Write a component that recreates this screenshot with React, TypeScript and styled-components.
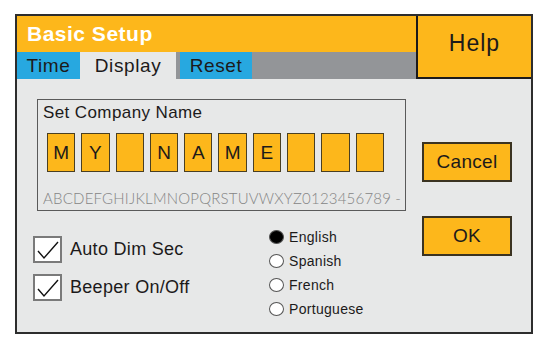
import React from 'react';
import styled, { createGlobalStyle } from 'styled-components';

const Global = createGlobalStyle`
  body {
    margin: 0;
    background: #ffffff;
    font-family: "Liberation Sans", Arial, sans-serif;
  }
`;

const orange = '#fdb71b';
const blue = '#27a8e0';
const panel = '#e7e8e8';
const ink = '#1c1a1a';

const Frame = styled.div`
  box-sizing: border-box;
  margin: 14px 0 0 15px;
  width: 518px;
  height: 320px;
  border: 2px solid #2d2d2d;
  background: ${panel};
  display: flex;
  flex-direction: column;
`;

const Header = styled.div`
  display: flex;
  height: 63px;
`;

const HeaderMain = styled.div`
  flex: 1;
  display: flex;
  flex-direction: column;
`;

const TitleBar = styled.div`
  height: 36px;
  background: ${orange};
  color: #ffffff;
  font-weight: bold;
  font-size: 21px;
  letter-spacing: 0.5px;
  display: flex;
  align-items: center;
  padding-left: 10px;
`;

const TabRow = styled.div`
  flex: 1;
  background: #939598;
  display: flex;
  gap: 4px;
`;

const Tab = styled.div<{ $active?: boolean; $w: number }>`
  width: ${(p) => p.$w}px;
  background: ${(p) => (p.$active ? panel : blue)};
  color: ${ink};
  font-size: 19px;
  letter-spacing: 0.6px;
  display: flex;
  align-items: center;
  justify-content: center;
  padding-top: 1px;
`;

const TabGroup = styled.div`
  display: flex;
`;

const HelpBox = styled.div`
  box-sizing: border-box;
  width: 115px;
  background: ${orange};
  border-left: 2px solid ${ink};
  border-bottom: 2px solid ${ink};
  color: ${ink};
  font-size: 23px;
  letter-spacing: 1px;
  display: flex;
  align-items: center;
  justify-content: center;
  padding-bottom: 6px;
`;

const Body = styled.div`
  flex: 1;
  display: flex;
  padding: 20px 0 0 20px;
`;

const LeftCol = styled.div`
  width: 369px;
  display: flex;
  flex-direction: column;
`;

const CompanyBox = styled.div`
  box-sizing: border-box;
  height: 112px;
  border: 1.5px solid #5a5a5a;
  padding: 2px 0 0 5px;
`;

const BoxTitle = styled.div`
  font-size: 17px;
  letter-spacing: 0.4px;
  line-height: 22px;
  color: ${ink};
`;

const LetterRow = styled.div`
  display: flex;
  gap: 6px;
  margin: 9px 0 0 4px;
`;

const LetterCell = styled.div`
  box-sizing: border-box;
  width: 28.3px;
  height: 39px;
  background: ${orange};
  border: 1.5px solid #4a3f22;
  font-size: 19px;
  color: ${ink};
  display: flex;
  align-items: center;
  justify-content: center;
`;

const Alphabet = styled.div`
  margin-top: 17px;
  font-family: "Lato", "Liberation Sans", sans-serif;
  font-weight: 300;
  font-size: 15px;
  letter-spacing: 0.2px;
  color: #858585;
  white-space: nowrap;
`;

const Options = styled.div`
  display: flex;
  margin: 17px 0 0 -4px;
`;

const CheckCol = styled.div`
  display: flex;
  flex-direction: column;
  gap: 11px;
  width: 236px;
  padding-top: 8px;
`;

const CheckRow = styled.div`
  display: flex;
  align-items: center;
  gap: 8px;
`;

const CheckBox = styled.div`
  box-sizing: border-box;
  width: 29px;
  height: 27px;
  background: #ffffff;
  border: 2px solid #7a7a7a;
  display: flex;
  align-items: center;
  justify-content: center;
`;

const CheckLabel = styled.span`
  font-size: 18px;
  letter-spacing: 0.3px;
  color: ${ink};
`;

const RadioCol = styled.div`
  display: flex;
  flex-direction: column;
  gap: 6px;
`;

const RadioRow = styled.div`
  display: flex;
  align-items: center;
  gap: 5px;
  height: 18px;
`;

const RadioDot = styled.div<{ $on?: boolean }>`
  box-sizing: border-box;
  width: 15px;
  height: 14px;
  border-radius: 50%;
  border: 1.5px solid #555;
  background: ${(p) => (p.$on ? '#000' : '#fff')};
`;

const RadioLabel = styled.span`
  font-size: 14px;
  letter-spacing: 0.3px;
  color: ${ink};
`;

const RightCol = styled.div`
  display: flex;
  flex-direction: column;
  gap: 34px;
  margin: 43px 0 0 16px;
`;

const ActionButton = styled.div`
  box-sizing: border-box;
  width: 90px;
  height: 40px;
  background: ${orange};
  border: 2px solid #3b3321;
  color: ${ink};
  font-size: 19px;
  letter-spacing: 0.3px;
  display: flex;
  align-items: center;
  justify-content: center;
`;

const Check = () => (
  <svg width="24" height="22" viewBox="0 0 24 22">
    <path d="M2 12 L8 19 L22 3" fill="none" stroke="#111" strokeWidth="1.4" />
  </svg>
);

const letters = ['M', 'Y', '', 'N', 'A', 'M', 'E', '', '', ''];
const languages = ['English', 'Spanish', 'French', 'Portuguese'];

export default function App() {
  return (
    <>
      <Global />
      <Frame>
        <Header>
          <HeaderMain>
            <TitleBar>Basic Setup</TitleBar>
            <TabRow>
              <TabGroup>
                <Tab $w={63}>Time</Tab>
                <Tab $w={96} $active>
                  Display
                </Tab>
              </TabGroup>
              <Tab $w={72}>Reset</Tab>
            </TabRow>
          </HeaderMain>
          <HelpBox>Help</HelpBox>
        </Header>
        <Body>
          <LeftCol>
            <CompanyBox>
              <BoxTitle>Set Company Name</BoxTitle>
              <LetterRow>
                {letters.map((l, i) => (
                  <LetterCell key={i}>{l}</LetterCell>
                ))}
              </LetterRow>
              <Alphabet>ABCDEFGHIJKLMNOPQRSTUVWXYZ0123456789 -</Alphabet>
            </CompanyBox>
            <Options>
              <CheckCol>
                <CheckRow>
                  <CheckBox>
                    <Check />
                  </CheckBox>
                  <CheckLabel>Auto Dim Sec</CheckLabel>
                </CheckRow>
                <CheckRow>
                  <CheckBox>
                    <Check />
                  </CheckBox>
                  <CheckLabel>Beeper On/Off</CheckLabel>
                </CheckRow>
              </CheckCol>
              <RadioCol>
                {languages.map((l, i) => (
                  <RadioRow key={l}>
                    <RadioDot $on={i === 0} />
                    <RadioLabel>{l}</RadioLabel>
                  </RadioRow>
                ))}
              </RadioCol>
            </Options>
          </LeftCol>
          <RightCol>
            <ActionButton>Cancel</ActionButton>
            <ActionButton>OK</ActionButton>
          </RightCol>
        </Body>
      </Frame>
    </>
  );
}
